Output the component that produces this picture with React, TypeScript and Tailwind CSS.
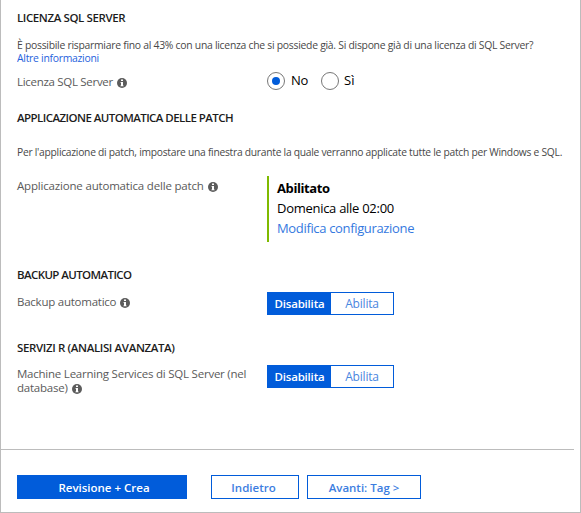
import type { ReactNode } from "react";

function InfoIcon() {
  return (
    <svg className="ml-1 inline-block size-[10px] align-[-2px]" viewBox="0 0 10 10" aria-hidden="true">
      <circle cx="5" cy="5" r="5" fill="#5c5c5c" />
      <path d="M4 1.6h2v1.5H4zM3.5 3.9H6v3.5h.6v.9H3.4v-.9H4V4.8h-.5z" fill="#fff" />
    </svg>
  );
}

function Heading({ className, children }: { className: string; children: ReactNode }) {
  return (
    <h2 className={`h-4 text-[11.5px] leading-4 font-semibold whitespace-nowrap text-[#1c1c1c] ${className}`}>
      {children}
    </h2>
  );
}

function Label({ className, children }: { className: string; children: ReactNode }) {
  return (
    <div className={`w-[250px] shrink-0 text-[11.5px] leading-[14px] whitespace-nowrap text-[#5a5a5a] ${className}`}>
      {children}
    </div>
  );
}

function Toggle() {
  return (
    <div className="flex h-[23px] w-[127px] border border-[#015cda] leading-[21px]">
      <button className="w-[63px] bg-[#015cda] text-center text-[11.5px] font-semibold tracking-[-0.2px] text-white">
        Disabilita
      </button>
      <button className="flex-1 text-center text-[12px] tracking-[-0.2px] text-[#4a86e0]">Abilita</button>
    </div>
  );
}

export default function App() {
  return (
    <main className="flex h-[513px] w-[581px] flex-col border-r border-b border-l border-[#bcbcbc] bg-white font-['Open_Sans','Noto_Sans',sans-serif]">
      <section className="h-[100px] pt-[10px] pl-4">
        <Heading className="tracking-[-0.4px]">LICENZA SQL SERVER</Heading>
        <p className="mt-3 w-max origin-left scale-x-[0.903] text-[11.5px] leading-[13px] tracking-[-0.3px] whitespace-nowrap text-[#484848]">
          È possibile risparmiare fino al 43% con una licenza che si possiede già. Si dispone già di una licenza di SQL Server?
          <br />
          <a className="text-[#1f62dc]">Altre informazioni</a>
        </p>
        <div className="mt-[7px] flex h-5 items-center">
          <Label className="pt-px tracking-[-0.3px]">Licenza SQL Server<InfoIcon /></Label>
          <label className="flex w-[54px] shrink-0 items-center gap-[6px] text-[13px] tracking-[-0.2px] text-black">
            <span className="flex size-[18px] shrink-0 items-center justify-center rounded-full border border-[#777]">
              <span className="size-2 rounded-full bg-[#015cda]" />
            </span>
            No
          </label>
          <label className="flex items-center gap-[5px] text-[13px] text-black">
            <span className="size-[18px] rounded-full border border-[#777]" />
            Sì
          </label>
        </div>
      </section>

      <section className="h-[157px] pt-[10px] pl-4">
        <Heading className="tracking-[-0.56px]">APPLICAZIONE AUTOMATICA DELLE PATCH</Heading>
        <p className="mt-[19px] w-max origin-left scale-x-[0.894] text-[11.5px] leading-[14px] tracking-[-0.3px] whitespace-nowrap text-[#484848]">
          Per l'applicazione di patch, impostare una finestra durante la quale verranno applicate tutte le patch per Windows e SQL.
        </p>
        <div className="mt-[17px] flex">
          <Label className="pt-[3px] tracking-[-0.18px]">Applicazione automatica delle patch<InfoIcon /></Label>
          <div className="h-[66px] border-l-2 border-[#7fba00] pt-[2px] pl-2 text-[13px] leading-5 text-black">
            <p className="font-bold tracking-[-0.4px]">Abilitato</p>
            <p className="tracking-[-0.28px]">Domenica alle 02:00</p>
            <a className="block tracking-[-0.34px] text-[#3579e0]">Modifica configurazione</a>
          </div>
        </div>
      </section>

      <section className="h-[73px] pt-[10px] pl-4">
        <Heading className="tracking-[-0.6px]">BACKUP AUTOMATICO</Heading>
        <div className="mt-[9px] flex">
          <Label className="pt-[3px] tracking-[-0.24px]">Backup automatico<InfoIcon /></Label>
          <Toggle />
        </div>
      </section>

      <section className="flex-1 pt-[10px] pl-4">
        <Heading className="tracking-[-0.37px]">SERVIZI R (ANALISI AVANZATA)</Heading>
        <div className="mt-[9px] flex">
          <Label className="pt-[2px] tracking-[-0.23px]">
            Machine Learning Services di SQL Server (nel
            <br />
            database)<InfoIcon />
          </Label>
          <Toggle />
        </div>
      </section>

      <footer className="mr-[6px] flex h-[63px] border-t border-[#bcbcbc] pt-[25px] pl-4 text-[11.5px] font-semibold">
        <button className="h-6 w-[170px] bg-[#015cda] pt-px pl-1 text-white">Revisione + Crea</button>
        <button className="ml-6 h-6 w-[88px] border border-[#015cda] pt-px pr-[3px] text-[#3c7ddf]">Indietro</button>
        <button className="ml-2 h-6 w-[114px] border border-[#015cda] pt-px text-[#3c7ddf]">Avanti: Tag &gt;</button>
      </footer>
    </main>
  );
}
